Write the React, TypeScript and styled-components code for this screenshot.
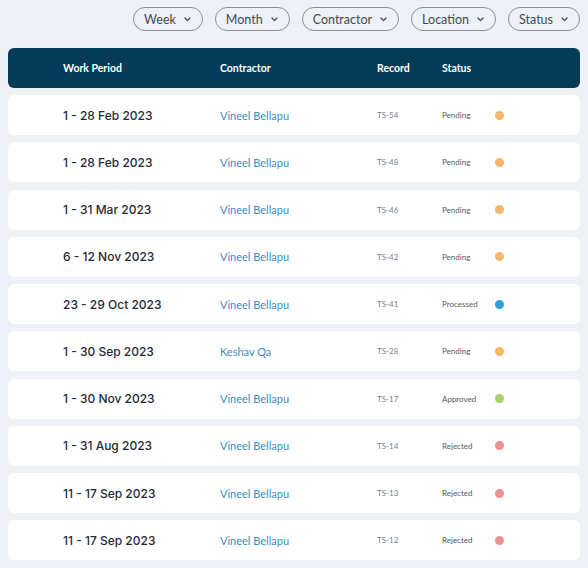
import React from "react";
import styled, { createGlobalStyle } from "styled-components";

const GlobalStyle = createGlobalStyle`
  html, body {
    margin: 0;
    padding: 0;
    background: #eef1f5;
    font-family: "Lato", "Open Sans", sans-serif;
  }
`;

type Status = "Pending" | "Processed" | "Approved" | "Rejected";

interface Timesheet {
  period: string;
  contractor: string;
  record: string;
  status: Status;
}

const rows: Timesheet[] = [
  { period: "1 - 28 Feb 2023", contractor: "Vineel Bellapu", record: "TS-54", status: "Pending" },
  { period: "1 - 28 Feb 2023", contractor: "Vineel Bellapu", record: "TS-48", status: "Pending" },
  { period: "1 - 31 Mar 2023", contractor: "Vineel Bellapu", record: "TS-46", status: "Pending" },
  { period: "6 - 12 Nov 2023", contractor: "Vineel Bellapu", record: "TS-42", status: "Pending" },
  { period: "23 - 29 Oct 2023", contractor: "Vineel Bellapu", record: "TS-41", status: "Processed" },
  { period: "1 - 30 Sep 2023", contractor: "Keshav Qa", record: "TS-28", status: "Pending" },
  { period: "1 - 30 Nov 2023", contractor: "Vineel Bellapu", record: "TS-17", status: "Approved" },
  { period: "1 - 31 Aug 2023", contractor: "Vineel Bellapu", record: "TS-14", status: "Rejected" },
  { period: "11 - 17 Sep 2023", contractor: "Vineel Bellapu", record: "TS-13", status: "Rejected" },
  { period: "11 - 17 Sep 2023", contractor: "Vineel Bellapu", record: "TS-12", status: "Rejected" },
];

const statusColors: Record<Status, string> = {
  Pending: "#f7b76a",
  Processed: "#2f9fe0",
  Approved: "#a8d26c",
  Rejected: "#ec9090",
};

const filters = ["Week", "Month", "Contractor", "Location", "Status"];

const Page = styled.div`
  padding: 7px 8px 8px 8px;
  display: flex;
  flex-direction: column;
`;

const FilterBar = styled.div`
  display: flex;
  justify-content: flex-end;
  gap: 12px;
  margin-bottom: 17px;
`;

const FilterButton = styled.button`
  display: flex;
  align-items: center;
  gap: 8px;
  height: 24px;
  padding: 0 11px 0 10px;
  border: 1px solid #8a8f96;
  border-radius: 12px;
  background: transparent;
  font-family: "Lato", "Open Sans", sans-serif;
  font-size: 12.5px;
  color: #444a52;
  cursor: pointer;
`;

const Chevron = () => (
  <svg width="7" height="5" viewBox="0 0 7 5" fill="none">
    <path d="M1 1 L3.5 3.6 L6 1" stroke="#444a52" strokeWidth="1.3" strokeLinecap="round" strokeLinejoin="round" />
  </svg>
);

const columns = "157px 157px 65px 52px 1fr";

const Header = styled.div`
  display: grid;
  grid-template-columns: ${columns};
  align-items: center;
  height: 40px;
  padding-left: 55px;
  background: #053a59;
  border-radius: 6px;
  color: #ffffff;
  font-size: 10.5px;
  font-weight: 700;
  margin-bottom: 7px;
`;

const List = styled.div`
  display: flex;
  flex-direction: column;
  gap: 7.25px;
`;

const Row = styled.div`
  display: grid;
  grid-template-columns: ${columns};
  align-items: center;
  height: 40px;
  padding-left: 55px;
  background: #ffffff;
  border-radius: 6px;
`;

const Period = styled.span`
  font-family: "Inter", "Lato", sans-serif;
  font-size: 12px;
  font-weight: 500;
  color: #1e2a38;
`;

const Contractor = styled.span`
  font-size: 11px;
  color: #3a8dc5;
`;

const Record = styled.span`
  font-size: 8px;
  color: #7a7f86;
`;

const StatusText = styled.span`
  font-size: 8px;
  color: #555a60;
`;

const Dot = styled.span<{ $color: string }>`
  width: 9px;
  height: 9px;
  margin-left: 1px;
  border-radius: 50%;
  background: ${(p) => p.$color};
`;

export default function App() {
  return (
    <>
      <GlobalStyle />
      <Page>
        <FilterBar>
          {filters.map((f) => (
            <FilterButton key={f}>
              {f}
              <Chevron />
            </FilterButton>
          ))}
        </FilterBar>
        <Header>
          <span>Work Period</span>
          <span>Contractor</span>
          <span>Record</span>
          <span>Status</span>
        </Header>
        <List>
          {rows.map((r) => (
            <Row key={r.record}>
              <Period>{r.period}</Period>
              <Contractor>{r.contractor}</Contractor>
              <Record>{r.record}</Record>
              <StatusText>{r.status}</StatusText>
              <Dot $color={statusColors[r.status]} />
            </Row>
          ))}
        </List>
      </Page>
    </>
  );
}
